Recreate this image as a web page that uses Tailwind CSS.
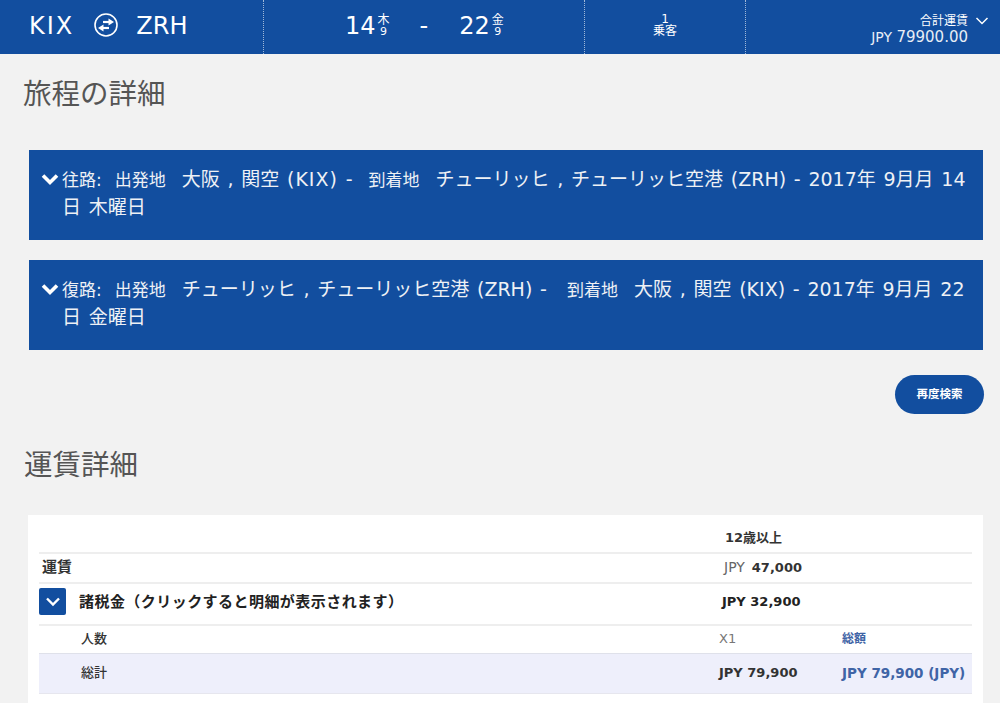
<!DOCTYPE html>
<html lang="ja">
<head>
  <meta charset="UTF-8">
  <title>旅程の詳細</title>
  <script src="https://cdn.jsdelivr.net/npm/@tailwindcss/browser@4"></script>
</head>
<body class="bg-[#f2f2f2] font-['DejaVu_Sans','Noto_Sans_CJK_JP',sans-serif] h-[703px] overflow-hidden">
  <!-- top summary bar -->
  <header class="h-[54px] bg-[#124e9f] text-white flex">
    <div class="w-[264px] pl-[29px] pb-[2px] flex items-center border-r border-dotted border-white/60">
      <span class="text-[24px] leading-none tracking-[2px]">KIX</span>
      <svg class="w-[24px] h-[24px] ml-[20px] mb-[2px]" viewBox="0 0 24 24" fill="none" stroke="white">
        <circle cx="12" cy="12" r="11" stroke-width="1.600"/>
        <path d="M9 9h6.500" stroke-width="2.200"/>
        <path d="M14.500 5.500l5.500 3.500-5.500 3.500z" fill="white" stroke="none"/>
        <path d="M15 15h-6.500" stroke-width="2.200"/>
        <path d="M9.500 11.500L4 15l5.500 3.500z" fill="white" stroke="none"/>
      </svg>
      <span class="text-[24px] leading-none ml-[18px]">ZRH</span>
    </div>
    <div class="w-[321px] pl-[81px] pb-[2px] flex items-center border-r border-dotted border-white/60">
      <span class="text-[24px] leading-none">14</span>
      <span class="ml-[2px] flex flex-col items-center text-[12px] leading-[11px]"><span>木</span><span class="text-[11px]">9</span></span>
      <span class="text-[24px] leading-none ml-[30px]">-</span>
      <span class="text-[24px] leading-none ml-[31px]">22</span>
      <span class="ml-[2px] flex flex-col items-center text-[12px] leading-[11px]"><span>金</span><span class="text-[11px]">9</span></span>
    </div>
    <div class="w-[161px] flex flex-col items-center justify-center border-r border-dotted border-white/60 text-[12px] leading-[12px] pb-[4px]">
      <span>1</span>
      <span>乗客</span>
    </div>
    <div class="flex-1 flex pr-[11px] pt-[14px] justify-end">
      <div class="text-right">
        <div class="text-[12px] leading-[15px]">合計運賃</div>
        <div class="text-[14px] leading-[17px] text-[#e8edf5]">JPY <span class="text-[15px]">79900.00</span></div>
      </div>
      <svg class="w-[14px] h-[10px] ml-[7px] mt-[2px]" viewBox="0 0 14 10" fill="none" stroke="white" stroke-width="1.500"><path d="M1.500 2l5.500 5.500L12.500 2"/></svg>
    </div>
  </header>

  <h1 class="text-[28.500px] leading-[40px] text-[#555] ml-[23px] mt-[21px]">旅程の詳細</h1>

  <div class="ml-[29px] w-[954px] mt-[35px] flex flex-col gap-[20px]">
    <div class="h-[90px] bg-[#124e9f] text-[#eef1f5] text-[19px] leading-[27px] pt-[16px] pl-[12px] pr-[10px] flex [word-spacing:1.700px]">
      <svg class="w-[18px] h-[14px] mt-[6px] mr-[3px] shrink-0" viewBox="0 0 18 14" fill="none" stroke="white" stroke-width="3.600"><path d="M2 3.500l7 7 7-7"/></svg>
      <p><span class="text-[17px]">往路:</span><span class="text-[17px] ml-[13px]">出発地</span><span class="ml-[16px]">大阪 , 関空 <span class="tracking-[1px]">(KIX)</span> -</span><span class="text-[17px] ml-[16px]">到着地</span><span class="ml-[16px]">チューリッヒ , チューリッヒ空港 (ZRH) - 2017年 9月月 14日 木曜日</span></p>
    </div>
    <div class="h-[90px] bg-[#124e9f] text-[#eef1f5] text-[19px] leading-[27px] pt-[16px] pl-[12px] pr-[10px] flex [word-spacing:1.700px]">
      <svg class="w-[18px] h-[14px] mt-[6px] mr-[3px] shrink-0" viewBox="0 0 18 14" fill="none" stroke="white" stroke-width="3.600"><path d="M2 3.500l7 7 7-7"/></svg>
      <p><span class="text-[17px]">復路:</span><span class="text-[17px] ml-[13px]">出発地</span><span class="ml-[16px]">チューリッヒ , チューリッヒ空港 (ZRH) -</span><span class="text-[17px] ml-[20px]">到着地</span><span class="ml-[16px]">大阪 , 関空 (KIX) - 2017年 9月月 22日 金曜日</span></p>
    </div>
  </div>

  <div class="flex justify-end pr-[16px] mt-[25px]">
    <button class="w-[89px] h-[39px] rounded-full bg-[#124e9f] text-white text-[11.500px] font-bold">再度検索</button>
  </div>

  <h2 class="text-[28.500px] leading-[40px] text-[#555] ml-[24px] mt-[32px]">運賃詳細</h2>

  <!-- fare table -->
  <div class="ml-[28px] w-[955px] mt-[29px] bg-white px-[11px] h-[200px] text-[13px] text-[#333]">
    <div class="grid grid-cols-[686px_118px_1fr] h-[39px] border-b-2 border-[#eeeeee] items-end font-bold pb-[5px]">
      <span></span><span>12歳以上</span><span></span>
    </div>
    <div class="grid grid-cols-[685px_119px_1fr] h-[30px] border-b-2 border-[#eeeeee] items-center pb-[1px]">
      <span class="pl-[3px] font-bold text-[15px]">運賃</span><span><span class="text-[#666] text-[14px]">JPY</span><b class="ml-[7px]">47,000</b></span><span></span>
    </div>
    <div class="grid grid-cols-[683px_121px_1fr] h-[42px] border-b-2 border-[#eeeeee] items-center font-bold text-[#222] pb-[5px]">
      <span class="flex items-center">
        <span class="w-[27px] h-[27px] rounded-[2px] bg-[#124e9f] flex items-center justify-center">
          <svg class="w-[16px] h-[12px]" viewBox="0 0 16 12" fill="none" stroke="white" stroke-width="2.400"><path d="M2 2.500l6 6 6-6"/></svg>
        </span>
        <span class="ml-[13px] pt-[2px] text-[15px] tracking-[0.450px]">諸税金（クリックすると明細が表示されます）</span>
      </span>
      <span>JPY 32,900</span><span></span>
    </div>
    <div class="grid grid-cols-[680px_123px_1fr] h-[28px] border-b border-[#dfe1ea] items-center pb-[1px]">
      <span class="pl-[42px] font-medium">人数</span><span class="text-[#777]">X1</span><span class="text-[#3f64a6] font-bold text-[12px]">総額</span>
    </div>
    <div class="grid grid-cols-[680px_123px_1fr] h-[40px] bg-[#eeeffb] border-b border-[#e6e6ee] items-center font-bold pb-[1px]">
      <span class="pl-[42px] font-medium">総計</span><span>JPY 79,900</span><span class="text-[#3f64a6] text-[13.500px]">JPY 79,900 (JPY)</span>
    </div>
  </div>
</body>
</html>
